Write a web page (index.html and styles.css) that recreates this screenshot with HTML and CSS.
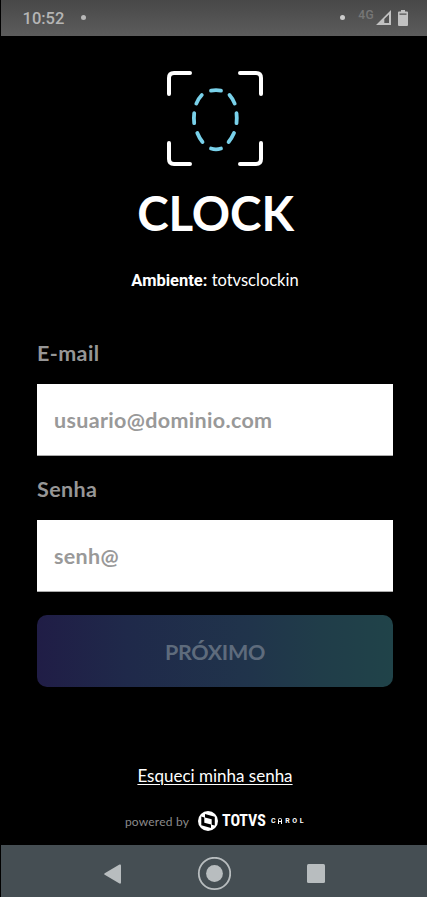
FILE: index.html
```html
<!DOCTYPE html>
<html lang="pt-BR">
<head>
<meta charset="utf-8">
<title>Clock</title>
<link rel="stylesheet" href="styles.css">
</head>
<body>
<div class="screen">
  <header class="status">
    <span class="time">10:52</span>
    <i class="dot"></i>
    <i class="dot dot-right"></i>
    <span class="network">4G</span>
    <svg class="signal" width="16" height="16" viewBox="0 0 16 16"><path fill-rule="evenodd" d="M15 0v15H0zM13 4.500 8.300 9v4H13z"/></svg>
    <svg class="battery" width="10" height="16" viewBox="0 0 10 16"><path fill-rule="evenodd" d="M3 0h4v1.500h2q1 0 1 1V15q0 1-1 1H1q-1 0-1-1V2.500q0-1 1-1h2zM1.500 3.500v1.200h7V3.500z"/></svg>
  </header>

  <main class="content">
    <svg class="face" width="98" height="98" viewBox="0 0 98 98" fill="none" stroke-linecap="round" stroke-linejoin="round">
      <g stroke="#fff" stroke-width="4">
        <path d="M3 24V8q0-5 5-5h16"/>
        <path d="M74 3h16q5 0 5 5v16"/>
        <path d="M3 73v16q0 5 5 5h16"/>
        <path d="M95 73v16q0 5-5 5H74"/>
      </g>
      <g stroke="#79d1ea" stroke-width="3.800">
        <path d="M45 20.600q5-.8 10 0"/>
        <path d="M63.500 25q3.200 3.600 5.200 8.600"/>
        <path d="M70.500 43.200q.6 5 0 10"/>
        <path d="M68 63q-2.200 5-5.400 9"/>
        <path d="M55 78.500q-5 1.700-10 0"/>
        <path d="M36.500 72q-3.200-4-5.200-9"/>
        <path d="M28.200 53.200q-.6-5 0-10"/>
        <path d="M30.300 33.600q2-5 5.500-8.600"/>
      </g>
    </svg>
    <h1 class="title">CLOCK</h1>
    <p class="environment"><b>Ambiente:</b> <span>totvsclockin</span></p>

    <form class="form">
      <label class="label label-email" for="email">E-mail</label>
      <input class="field field-email" id="email" type="email" placeholder="usuario@dominio.com">
      <label class="label label-senha" for="senha">Senha</label>
      <input class="field field-senha" id="senha" type="password" placeholder="senh@">
      <button class="submit" type="button"><span>PRÓXIMO</span></button>
    </form>

    <a class="forgot" href="#">Esqueci minha senha</a>
    <footer class="powered">
      <span class="by">powered by</span>
      <svg class="mark" width="20" height="20" viewBox="0 0 20 20"><circle cx="10" cy="10" r="10" fill="#fff"/><path d="M7 3 16.800 5.800V14.500L13.700 13.800V8.300L7 6.500z"/><path d="M3.300 5.600 6.300 6.400V11.700L13 13.500V17L3.300 14.300z"/></svg>
      <span class="totvs">TOTVS</span>
      <span class="carol">C<svg class="letter-a" width="4" height="6" viewBox="0 0 4 6"><path d="M.5 6V1.500Q.5.500 1.500.500h1q1 0 1 1V6M.5 3.500h3"/></svg>ROL</span>
    </footer>
  </main>

  <nav class="navbar">
    <svg width="17" height="20" viewBox="0 0 17 20"><path d="M.7 9.200 15.500.500Q17 0 17 1.500v17q0 1.500-1.500 1L.7 10.800Q-.3 10 .7 9.200z"/></svg>
    <svg width="34" height="34" viewBox="0 0 34 34"><circle class="ring" cx="17.500" cy="16.500" r="15.700"/><circle cx="17.500" cy="16.500" r="8.400"/></svg>
    <svg width="18" height="19" viewBox="0 0 18 19"><rect width="18" height="19" rx="1.500"/></svg>
  </nav>
</div>
</body>
</html>
```
FILE: styles.css
```css
* { box-sizing: border-box; }
body { margin: 0; background: #000; }
.screen {
  display: flex;
  flex-direction: column;
  height: 897px;
  padding-left: 1px;
  overflow: hidden;
  background: #000;
  color: #fff;
  font-family: Lato, "Noto Sans", sans-serif;
}
.status {
  display: flex;
  align-items: center;
  flex: none;
  height: 36px;
  padding: 0 19px 0 21.500px;
  background: linear-gradient(#484848, #5c5c5c);
  color: #b5b5b5;
  fill: #c1c1c1;
}
.time { font: 500 16.500px/36px Roboto, sans-serif; width: 42px; white-space: nowrap; padding-top: 1px; }
.dot { width: 5px; height: 5px; border-radius: 50%; background: #b8b8b8; margin: -1px 0 0 16.500px; }
.dot-right { margin-left: auto; background: #ccc; }
.network { font: 500 12px/12px Roboto, sans-serif; color: #777; margin: -6px 2px 0 13px; letter-spacing: .4px; }
.battery { margin-left: 6px; }
.content {
  display: flex;
  flex-direction: column;
  align-items: center;
  flex: 1;
  padding: 34px 34px 0 36px;
}
.face { flex: none; }
.title { margin: 15px 0 0; padding-left: 1px; font-size: 47.500px; line-height: 60px; font-weight: 700; height: 60px; letter-spacing: -.1px; }
.environment { margin: 25px 0 0; font: 400 16.500px/24px Lato, sans-serif; height: 24px; white-space: nowrap; }
.environment b { font-family: Roboto, sans-serif; font-weight: 700; }
.form { display: flex; flex-direction: column; align-self: stretch; margin-top: 46px; }
.label { font-size: 21.500px; font-weight: 700; line-height: 30px; letter-spacing: .4px; color: #969696; }
.label-senha { margin-top: 18px; }
.field {
  width: 100%;
  height: 72px;
  margin: 16px 0 0;
  padding: 0 17px;
  border: 0;
  border-bottom: 1px solid #aaa;
  border-radius: 0;
  outline: 0;
  background: #fff;
  font: 700 21.500px Lato, sans-serif;
  letter-spacing: .33px;
}
.field-senha { margin-top: 16px; }
.field::placeholder { color: #999; opacity: 1; }
.submit {
  height: 72px;
  margin-top: 23px;
  padding: 1px 0 0;
  border: 0;
  border-radius: 10px;
  background: linear-gradient(90deg, #201d46, #1f294a 25%, #20344b 60%, #203d49 80%, #204349);
  color: #5e6b7c;
  font: 700 21.500px Lato, sans-serif;
  letter-spacing: -.3px;
}
.forgot { margin-top: 77px; color: #fff; font-size: 17px; line-height: 24px; text-underline-offset: 2px; text-decoration-thickness: 1px; }
.powered { display: flex; align-items: center; height: 24px; margin-top: 21px; }
.by { color: #8b8b8b; font-size: 12px; letter-spacing: .2px; }
.mark { margin-left: 9px; }
.totvs { margin-left: 4px; width: 44px; font: 700 16px/20px "Roboto Condensed", Roboto, sans-serif; letter-spacing: -.1px; }
.carol { display: flex; align-items: center; margin-left: 5px; width: 34px; font: 700 7px/10px Roboto, sans-serif; letter-spacing: 2.600px; }
.letter-a { flex: none; margin-right: 3px; fill: none; stroke: #fff; }
.navbar {
  display: flex;
  justify-content: center;
  align-items: center;
  gap: 76px;
  flex: none;
  height: 52px;
  padding-top: 5px;
  padding-left: 1px;
  background: #454e53;
  fill: #b8bdbf;
}
.ring { fill: none; stroke: #b8bdbf; stroke-width: 1.800; }
```
